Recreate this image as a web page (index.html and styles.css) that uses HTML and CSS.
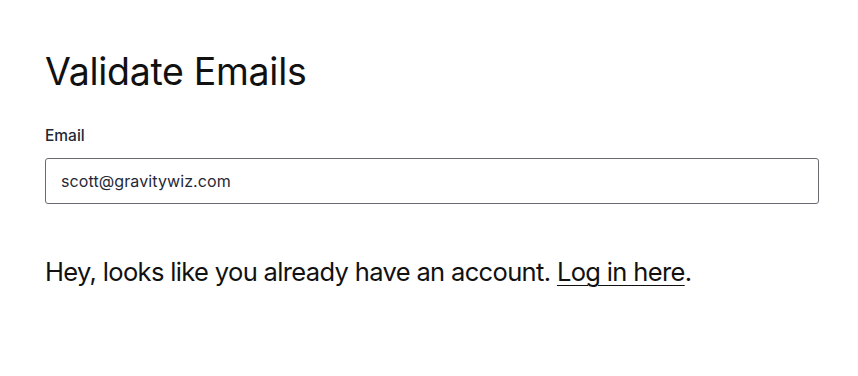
FILE: index.html
```html
<!DOCTYPE html>
<html>
<head>
<meta charset="utf-8">
<link rel="stylesheet" href="styles.css">
</head>
<body>
<div class="page">
  <h1 class="title">Validate Emails</h1>
  <div class="field">
    <label class="label" for="email">Email</label>
    <input class="input" id="email" type="text" value="scott@gravitywiz.com">
  </div>
  <p class="message">Hey, looks like you already have an account. <a class="link" href="#">Log in here</a>.</p>
</div>
</body>
</html>
```
FILE: styles.css
```css
html, body {
  margin: 0;
  padding: 0;
  background: #ffffff;
}
.page {
  padding: 48px 39px 0 45px;
  font-family: Inter, "Noto Sans", sans-serif;
  color: #1d1d1f;
}
.title {
  margin: 0 0 30px 0;
  font-size: 37.5px;
  font-weight: 400;
  line-height: 48px;
  letter-spacing: -0.3px;
  color: #111111;
}
.field {
  display: flex;
  flex-direction: column;
}
.label {
  font-size: 15.5px;
  font-weight: 500;
  color: #1f2937;
  line-height: 20px;
  margin-bottom: 12px;
}
.input {
  box-sizing: border-box;
  height: 46px;
  width: 100%;
  border: 1px solid #686b73;
  border-radius: 3px;
  padding: 0 15px;
  font-family: Inter, "Noto Sans", sans-serif;
  font-size: 16px;
  letter-spacing: 0.1px;
  color: #1f2937;
  background: #fff;
  outline: none;
}
.message {
  margin: 50px 0 0 0;
  font-size: 25.5px;
  line-height: 36px;
  font-weight: 400;
  color: #111111;
  letter-spacing: -0.65px;
}
.link {
  color: #111111;
  text-decoration: underline;
  text-decoration-thickness: 1px;
  text-underline-offset: 4px;
}
```
